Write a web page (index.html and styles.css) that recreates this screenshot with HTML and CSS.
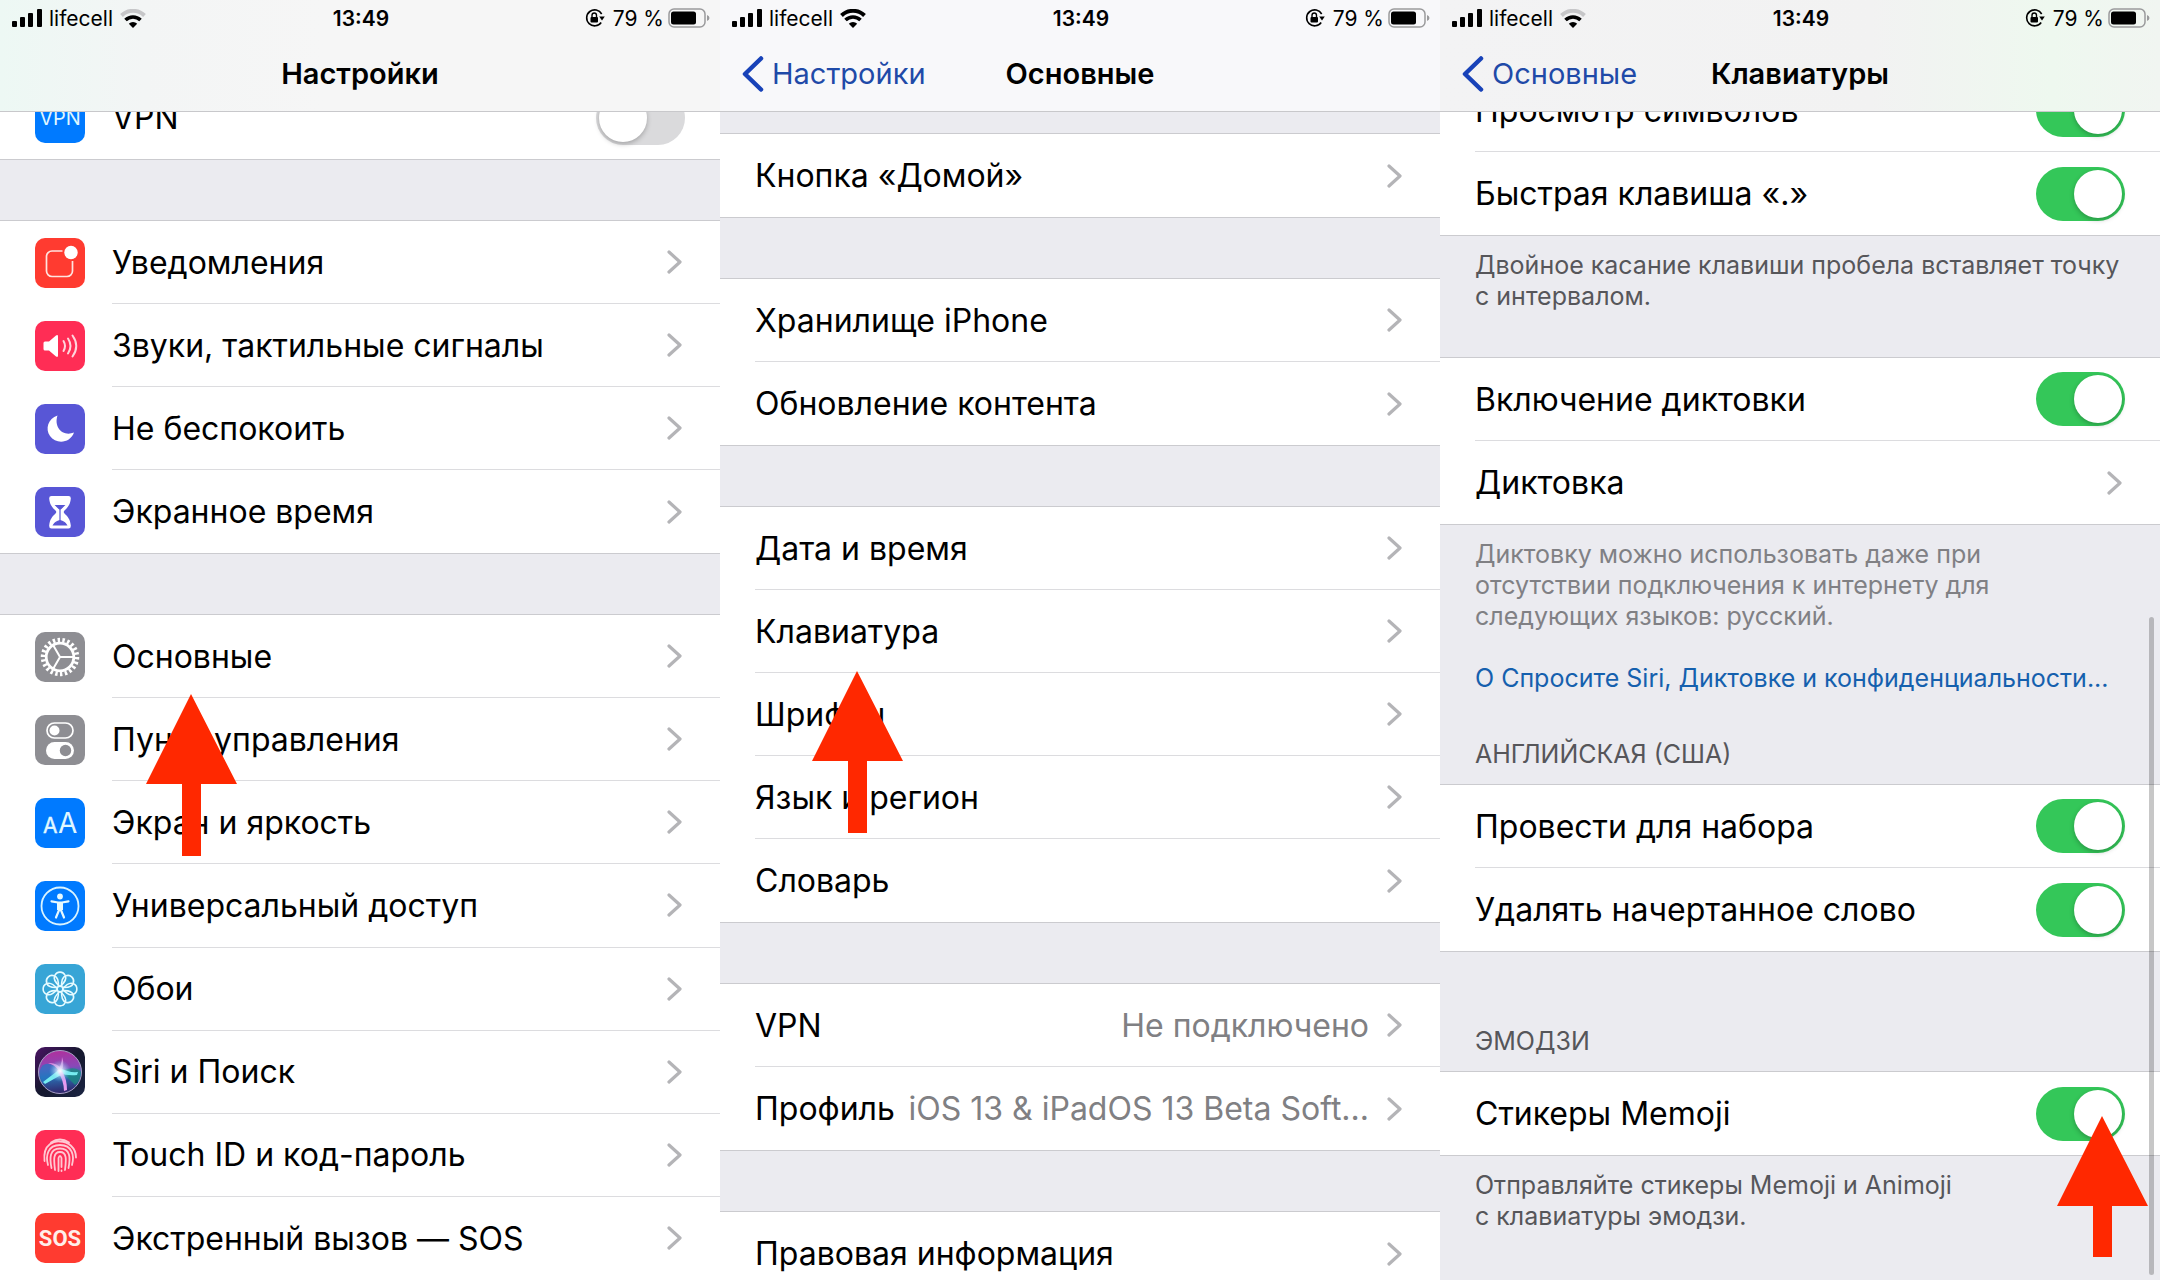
FILE: index.html
```html
<!DOCTYPE html>
<html lang="ru">

<head>
	<meta charset="utf-8">
	<title>Настройки</title>
	<link rel="stylesheet" href="styles.css">
</head>

<body>

	<!-- shared icons -->
	<svg class="sprite" aria-hidden="true">
		<symbol id="signal" viewBox="0 0 30 18">
			<rect x="0" y="12" width="5" height="6" rx="1"/>
			<rect x="8" y="8" width="5" height="10" rx="1"/>
			<rect x="16" y="4" width="5" height="14" rx="1"/>
			<rect x="25" y="0" width="5" height="18" rx="1"/>
		</symbol>
		<symbol id="wifi" viewBox="0 0 26 19">
			<path class="wifi-top" d="M1.5 6.5a16.5 16.5 0 0 1 23 0" fill="none" stroke-width="4"/>
			<path d="M5.5 11a10.800 10.800 0 0 1 15 0" fill="none" stroke="#000" stroke-width="3.600"/>
			<path d="M13 19l-4.200-4.300a6 6 0 0 1 8.400 0z" stroke="none"/>
		</symbol>
		<symbol id="lock" viewBox="0 0 20 20">
			<path d="M16.200 14.500a8 8 0 1 1 .5-8.500" fill="none" stroke="#000" stroke-width="1.600"/>
			<path d="M14.200 8.500h5.600l-2.800 4z"/>
			<rect x="5.500" y="9" width="7.500" height="5.500" rx="1"/>
			<path d="M7 9.500V7.300a2.250 2.250 0 0 1 4.500 0v2.200" fill="none" stroke="#000" stroke-width="1.400"/>
		</symbol>
		<symbol id="battery" viewBox="0 0 42 20">
			<rect x="1" y="1" width="36" height="18" rx="5" fill="none" stroke="#9a9a9c" stroke-width="1.500"/>
			<rect x="3" y="3.500" width="25" height="13" rx="2.500"/>
			<path d="M39 7v6q2.500-1 2.500-3t-2.500-3z" fill="#9a9a9c"/>
		</symbol>
		<symbol id="chevron" viewBox="0 0 15 24">
			<path d="M2 2l11 10L2 22" fill="none" stroke="#b4b4b7" stroke-width="3.200" stroke-linecap="round" stroke-linejoin="round"/>
		</symbol>
		<symbol id="back" viewBox="0 0 22 36">
			<path d="M19 2.500L3 18l16 15.500" fill="none" stroke="#1842b8" stroke-width="4.500" stroke-linecap="round" stroke-linejoin="round"/>
		</symbol>
		<symbol id="arrow" viewBox="0 0 91 162">
			<path d="M45 0L91 90H55V162H36V90H0z" fill="#ff2800"/>
		</symbol>
		<symbol id="arrow-short" viewBox="0 0 91 141">
			<path d="M45 0L91 90H55V141H36V90H0z" fill="#ff2800"/>
		</symbol>
	</svg>

	<main class="screens">

		<section class="screen">
			<header class="header header-first">
				<div class="status">
					<div class="status-left">
						<svg class="signal"><use href="#signal"/></svg>
						<span>lifecell</span>
						<svg class="wifi wifi-weak"><use href="#wifi"/></svg>
					</div>
					<time>13:49</time>
					<div class="status-right">
						<svg class="lock"><use href="#lock"/></svg>
						<span>79 %</span>
						<svg class="battery"><use href="#battery"/></svg>
					</div>
				</div>
				<div class="nav">
					<h1>Настройки</h1>
				</div>
			</header>

			<div class="group cut cut-first">
				<div class="row">
					<svg class="icon" viewBox="0 0 50 50">
						<rect width="50" height="50" rx="10" fill="#007aff"/>
						<text x="25" y="32" font-size="20" text-anchor="middle" fill="#dff6ff">VPN</text>
					</svg>
					<div class="row-body">
						<label for="vpn">VPN</label>
						<input class="switch" id="vpn" type="checkbox">
					</div>
				</div>
			</div>

			<div class="group">
				<a class="row" href="#">
					<svg class="icon" viewBox="0 0 50 50">
						<rect width="50" height="50" rx="10" fill="#ff3b30"/>
						<path d="M27.500 13H17a5.500 5.500 0 0 0-5.500 5.500V33a5.500 5.500 0 0 0 5.500 5.500h15a5.500 5.500 0 0 0 5.500-5.500V23" fill="none" stroke="#ffe4df" stroke-width="1.700"/>
						<circle cx="36" cy="14.500" r="6.700" fill="#fff"/>
					</svg>
					<span class="row-body"><span>Уведомления</span><svg class="chevron"><use href="#chevron"/></svg></span>
				</a>
				<a class="row" href="#">
					<svg class="icon" viewBox="0 0 50 50">
						<rect width="50" height="50" rx="10" fill="#ff2d55"/>
						<path d="M8.500 22q0-1.500 1.500-1.500h4l7-6q2-1.200 2 1v19q0 2.200-2 1l-7-6h-4q-1.500 0-1.500-1.500z" fill="#fff"/>
						<path d="M28.500 20q3 5 0 10M33 17.500q5 7.500 0 15M37.500 14.500q7.500 10.500 0 21" fill="none" stroke="#ffd5dd" stroke-width="2" stroke-linecap="round"/>
					</svg>
					<span class="row-body"><span>Звуки, тактильные сигналы</span><svg class="chevron"><use href="#chevron"/></svg></span>
				</a>
				<a class="row" href="#">
					<svg class="icon" viewBox="0 0 50 50">
						<rect width="50" height="50" rx="10" fill="#5856d6"/>
						<path d="M22.500 11.500C13 14.500 10 25 15 32c6 8.500 20 7.500 24-3.500C28 33 18.500 23.500 22.500 11.500z" fill="#fff"/>
					</svg>
					<span class="row-body"><span>Не беспокоить</span><svg class="chevron"><use href="#chevron"/></svg></span>
				</a>
				<a class="row" href="#">
					<svg class="icon" viewBox="0 0 50 50">
						<rect width="50" height="50" rx="10" fill="#5856d6"/>
						<path d="M16.500 9h17q2.500 0 2.300 2.500c-.5 6-3 9-6.300 12q-1.500 1.500 0 3c3.300 3 5.800 6 6.300 12q.2 3-2.300 3h-17q-2.500 0-2.300-3c.5-6 3-9 6.300-12q1.500-1.500 0-3c-3.300-3-5.800-6-6.300-12Q14 9 16.500 9z" fill="#fff"/>
						<path d="M21 18.500h8l-4 4zM25 21v13M18.500 38q2-3.500 6.500-4.500 4.500 1 6.500 4.500z" fill="#5856d6" stroke="#5856d6" stroke-width="1.200"/>
					</svg>
					<span class="row-body"><span>Экранное время</span><svg class="chevron"><use href="#chevron"/></svg></span>
				</a>
			</div>

			<div class="group group-fill">
				<a class="row" href="#">
					<svg class="icon" viewBox="0 0 50 50">
						<rect width="50" height="50" rx="10" fill="#8e8e93"/>
						<circle cx="25" cy="25" r="17" fill="none" stroke="#fff" stroke-width="4.500" pathLength="88" stroke-dasharray="2 2"/>
						<circle cx="25" cy="25" r="13.800" fill="none" stroke="#fff" stroke-width="2.800"/>
						<path d="M25 25h13M25 25l-6.800-11.800M25 25l-6.800 11.800" fill="none" stroke="#fff" stroke-width="2"/>
					</svg>
					<span class="row-body"><span>Основные</span><svg class="chevron"><use href="#chevron"/></svg></span>
					<svg class="arrow arrow-general"><use href="#arrow"/></svg>
				</a>
				<a class="row" href="#">
					<svg class="icon" viewBox="0 0 50 50">
						<rect width="50" height="50" rx="10" fill="#8e8e93"/>
						<rect x="12" y="8" width="26" height="15" rx="7.500" fill="none" stroke="#fff" stroke-width="1.700"/>
						<circle cx="19.500" cy="15.500" r="5" fill="#fff"/>
						<rect x="11" y="27" width="28" height="17" rx="8.500" fill="#fff"/>
						<circle cx="30.500" cy="35.500" r="5.700" fill="#8e8e93"/>
					</svg>
					<span class="row-body"><span>Пункт управления</span><svg class="chevron"><use href="#chevron"/></svg></span>
				</a>
				<a class="row" href="#">
					<svg class="icon" viewBox="0 0 50 50">
						<rect width="50" height="50" rx="10" fill="#007aff"/>
						<text x="8" y="35" font-size="21" fill="#e0f8ff" stroke="#e0f8ff" stroke-width=".4">A</text>
						<text x="23" y="35" font-size="28" fill="#e0f8ff">A</text>
					</svg>
					<span class="row-body"><span>Экран и яркость</span><svg class="chevron"><use href="#chevron"/></svg></span>
				</a>
				<a class="row" href="#">
					<svg class="icon" viewBox="0 0 50 50">
						<rect width="50" height="50" rx="10" fill="#007aff"/>
						<circle cx="25" cy="25" r="18.500" fill="none" stroke="#d9f4ff" stroke-width="1.800"/>
						<circle cx="25" cy="15.500" r="2.900" fill="#e6f9ff"/>
						<path d="M16.500 20.300l6.500 1.200h4l6.500-1.200M24.500 22v6l-3.500 8.500M25.500 22v6l3.500 8.500" fill="none" stroke="#e6f9ff" stroke-width="2.200" stroke-linecap="round"/>
						<path d="M22 21h6v8h-6z" fill="#e6f9ff"/>
					</svg>
					<span class="row-body"><span>Универсальный доступ</span><svg class="chevron"><use href="#chevron"/></svg></span>
				</a>
				<a class="row" href="#">
					<svg class="icon" viewBox="0 0 50 50">
						<rect width="50" height="50" rx="10" fill="#37a5d6"/>
						<g fill="none" stroke="#e6fbff" stroke-width="1.600">
							<path id="petal" d="M25 22.500C22 20 17.500 16 19.800 11.500a5.700 5.700 0 0 1 10.400 0C32.500 16 28 20 25 22.500z"/>
							<use href="#petal" transform="rotate(45 25 25)"/>
							<use href="#petal" transform="rotate(90 25 25)"/>
							<use href="#petal" transform="rotate(135 25 25)"/>
							<use href="#petal" transform="rotate(180 25 25)"/>
							<use href="#petal" transform="rotate(225 25 25)"/>
							<use href="#petal" transform="rotate(270 25 25)"/>
							<use href="#petal" transform="rotate(315 25 25)"/>
						</g>
						<circle cx="25" cy="25" r="2.700" fill="#37a5d6" stroke="#e6fbff" stroke-width="1.200"/>
					</svg>
					<span class="row-body"><span>Обои</span><svg class="chevron"><use href="#chevron"/></svg></span>
				</a>
				<a class="row" href="#">
					<svg class="icon" viewBox="0 0 50 50">
						<defs>
							<linearGradient id="siri-bg" x1="0" y1="0" x2="1" y2="1">
								<stop offset="0" stop-color="#4a1464"/>
								<stop offset=".5" stop-color="#15182e"/>
								<stop offset="1" stop-color="#1a2442"/>
							</linearGradient>
							<linearGradient id="siri-ball" x1="0.400" y1="0" x2="0.500" y2="1">
								<stop offset="0" stop-color="#b0309c"/>
								<stop offset=".4" stop-color="#8a48b8"/>
								<stop offset=".6" stop-color="#2b70b4"/>
								<stop offset="1" stop-color="#302268"/>
							</linearGradient>
							<radialGradient id="siri-glow">
								<stop offset="0" stop-color="#fff"/>
								<stop offset=".4" stop-color="#d7f2ff" stop-opacity=".6"/>
								<stop offset="1" stop-color="#62c8f0" stop-opacity="0"/>
							</radialGradient>
						</defs>
						<rect width="50" height="50" rx="10" fill="url(#siri-bg)"/>
						<circle cx="25" cy="25" r="21.500" fill="url(#siri-ball)" stroke="#a8a0c8"/>
						<path d="M26 24Q10 10 5 23q-1 8 3 13z" fill="#2377c4" opacity=".7"/>
						<path d="M26 24q14-6 20 1-1 10-6 13z" fill="#1c8a82" opacity=".8"/>
						<path d="M25 22L8 35l2 2 16-9zM25 21q9 5 18 4l-1 3q-10 1-18-2z" fill="#76edf0"/>
						<path d="M23 25q6 9 6 19l3-1q0-11-5-19z" fill="#e59af0"/>
						<path d="M22 24q5-6 5-14 3 8-1 15zM24 24q-5-7-11-8 8-1 14 6z" fill="#f0a0ec" opacity=".8"/>
						<circle cx="25" cy="24" r="11" fill="url(#siri-glow)"/>
					</svg>
					<span class="row-body"><span>Siri и Поиск</span><svg class="chevron"><use href="#chevron"/></svg></span>
				</a>
				<a class="row" href="#">
					<svg class="icon" viewBox="0 0 50 50">
						<rect width="50" height="50" rx="10" fill="#ff2d55"/>
						<g fill="none" stroke="#ffc9d3" stroke-width="1.800" stroke-linecap="round">
							<path d="M16 12.500q9-6 18 0"/>
							<path d="M9.500 31c-2-18 11-20 15.500-19.500 8 0 16 6 16 16"/>
							<path d="M13 35c-2.500-9-.5-20 12-20s14.500 11 12 20"/>
							<path d="M16.500 38c-2-10-2-19.500 8.500-19.500S35.500 28 33.500 38"/>
							<path d="M20 40c-1-9-2.500-18 5-18s6 9 5 18"/>
							<path d="M23.500 41V28q1.500-4 3 0v9M26.500 40.500v.5"/>
						</g>
					</svg>
					<span class="row-body"><span>Touch ID и код-пароль</span><svg class="chevron"><use href="#chevron"/></svg></span>
				</a>
				<a class="row" href="#">
					<svg class="icon" viewBox="0 0 50 50">
						<rect width="50" height="50" rx="10" fill="#ff3b30"/>
						<text class="sos" x="25" y="33" text-anchor="middle">SOS</text>
					</svg>
					<span class="row-body"><span>Экстренный вызов — SOS</span><svg class="chevron"><use href="#chevron"/></svg></span>
				</a>
			</div>
		</section>

		<section class="screen">
			<header class="header">
				<div class="status">
					<div class="status-left">
						<svg class="signal"><use href="#signal"/></svg>
						<span>lifecell</span>
						<svg class="wifi"><use href="#wifi"/></svg>
					</div>
					<time>13:49</time>
					<div class="status-right">
						<svg class="lock"><use href="#lock"/></svg>
						<span>79 %</span>
						<svg class="battery"><use href="#battery"/></svg>
					</div>
				</div>
				<div class="nav">
					<a class="back" href="#"><svg><use href="#back"/></svg>Настройки</a>
					<h1>Основные</h1>
				</div>
			</header>

			<div class="group group-top">
				<a class="row" href="#"><span class="row-body"><span>Кнопка «Домой»</span><svg class="chevron"><use href="#chevron"/></svg></span></a>
			</div>

			<div class="group">
				<a class="row" href="#"><span class="row-body"><span>Хранилище iPhone</span><svg class="chevron"><use href="#chevron"/></svg></span></a>
				<a class="row" href="#"><span class="row-body"><span>Обновление контента</span><svg class="chevron"><use href="#chevron"/></svg></span></a>
			</div>

			<div class="group">
				<a class="row" href="#"><span class="row-body"><span>Дата и время</span><svg class="chevron"><use href="#chevron"/></svg></span></a>
				<a class="row" href="#">
					<span class="row-body"><span>Клавиатура</span><svg class="chevron"><use href="#chevron"/></svg></span>
					<svg class="arrow arrow-keyboard"><use href="#arrow"/></svg>
				</a>
				<a class="row" href="#"><span class="row-body"><span>Шрифты</span><svg class="chevron"><use href="#chevron"/></svg></span></a>
				<a class="row" href="#"><span class="row-body"><span>Язык и регион</span><svg class="chevron"><use href="#chevron"/></svg></span></a>
				<a class="row" href="#"><span class="row-body"><span>Словарь</span><svg class="chevron"><use href="#chevron"/></svg></span></a>
			</div>

			<div class="group">
				<a class="row" href="#"><span class="row-body"><span>VPN</span><span class="value">Не подключено</span><svg class="chevron"><use href="#chevron"/></svg></span></a>
				<a class="row" href="#"><span class="row-body"><span>Профиль</span><span class="value">iOS 13 &amp; iPadOS 13 Beta Soft...</span><svg class="chevron"><use href="#chevron"/></svg></span></a>
			</div>

			<div class="group">
				<a class="row" href="#"><span class="row-body"><span>Правовая информация</span><svg class="chevron"><use href="#chevron"/></svg></span></a>
			</div>
		</section>

		<section class="screen">
			<header class="header header-last">
				<div class="status">
					<div class="status-left">
						<svg class="signal"><use href="#signal"/></svg>
						<span>lifecell</span>
						<svg class="wifi wifi-weak"><use href="#wifi"/></svg>
					</div>
					<time>13:49</time>
					<div class="status-right">
						<svg class="lock"><use href="#lock"/></svg>
						<span>79 %</span>
						<svg class="battery"><use href="#battery"/></svg>
					</div>
				</div>
				<div class="nav">
					<a class="back" href="#"><svg><use href="#back"/></svg>Основные</a>
					<h1>Клавиатуры</h1>
				</div>
			</header>

			<div class="group cut cut-last">
				<div class="row">
					<div class="row-body">
						<label for="preview">Просмотр символов</label>
						<input class="switch" id="preview" type="checkbox" checked>
					</div>
				</div>
				<div class="row">
					<div class="row-body">
						<label for="shortcut">Быстрая клавиша «.»</label>
						<input class="switch" id="shortcut" type="checkbox" checked>
					</div>
				</div>
			</div>
			<p class="note">Двойное касание клавиши пробела вставляет точку<br>с интервалом.</p>

			<div class="group">
				<div class="row">
					<div class="row-body">
						<label for="dictation">Включение диктовки</label>
						<input class="switch" id="dictation" type="checkbox" checked>
					</div>
				</div>
				<a class="row" href="#"><span class="row-body"><span>Диктовка</span><svg class="chevron"><use href="#chevron"/></svg></span></a>
			</div>
			<p class="note note-light">Диктовку можно использовать даже при<br>отсутствии подключения к интернету для<br>следующих языков: русский.<br><br><a href="#">О Спросите Siri, Диктовке и конфиденциальности...</a></p>

			<h2>АНГЛИЙСКАЯ (США)</h2>
			<div class="group">
				<div class="row">
					<div class="row-body">
						<label for="swipe">Провести для набора</label>
						<input class="switch" id="swipe" type="checkbox" checked>
					</div>
				</div>
				<div class="row">
					<div class="row-body">
						<label for="delete">Удалять начертанное слово</label>
						<input class="switch" id="delete" type="checkbox" checked>
					</div>
				</div>
			</div>

			<h2 class="heading-far">ЭМОДЗИ</h2>
			<div class="group">
				<div class="row">
					<div class="row-body">
						<label for="memoji">Стикеры Memoji</label>
						<input class="switch" id="memoji" type="checkbox" checked>
					</div>
					<svg class="arrow arrow-memoji"><use href="#arrow-short"/></svg>
				</div>
			</div>
			<p class="note">Отправляйте стикеры Memoji и Animoji<br>с клавиатуры эмодзи.</p>
			<div class="scrollbar"></div>
		</section>

	</main>

</body>

</html>
```
FILE: styles.css
```css
* {
	box-sizing: border-box;
}

body {
	margin: 0;
	font-family: Inter, "Noto Sans", sans-serif;
	font-size: 32px;
	color: #000;
	background-color: #ebebf0;
}

a {
	color: inherit;
	text-decoration: none;
}

svg {
	display: block;
	flex: none;
}

.sprite {
	position: absolute;
	width: 0;
	height: 0;
}

.screens {
	display: flex;
	height: 100vh;
	overflow: hidden;
}

.screen {
	display: flex;
	flex: 1;
	flex-direction: column;
	min-width: 0;
	position: relative;
}

/* header */

.header {
	flex: none;
	height: 112px;
	background-color: #f8f8fa;
	border-bottom: 1px solid #c8c8cb;
}

.header-first {
	background: linear-gradient(to right, #edf8f4, #f3f5f5 20%, #f6f6f6 45%);
}

.header-last {
	background: linear-gradient(to right, #f3f3f4, #f2f2f2 60%, #eef8ef 85%, #f1f5f1);
}

.status {
	display: grid;
	grid-template-columns: 1fr auto 1fr;
	align-items: center;
	height: 36px;
	padding: 0 10px 0 12px;
	font-size: 21px;
}

.status time {
	font-weight: 600;
}

.status-left,
.status-right {
	display: flex;
	align-items: center;
	gap: 7px;
}

.status-right {
	justify-content: flex-end;
	gap: 4px;
}

.signal {
	width: 30px;
	height: 18px;
}

.wifi {
	width: 26px;
	height: 19px;
	--top: #000;
}

.wifi-top {
	stroke: var(--top);
}

.wifi-weak {
	--top: #c6c6c8;
}

.lock {
	width: 20px;
	height: 20px;
	margin-right: 4px;
}

.battery {
	width: 42px;
	height: 20px;
}

.nav {
	display: grid;
	grid-template-columns: 1fr auto 1fr;
	align-items: center;
	height: 75px;
	padding: 0 22px;
}

.nav h1 {
	grid-column: 2;
	margin: 0;
	font-size: 29px;
	font-weight: 600;
}

.back {
	display: flex;
	align-items: center;
	gap: 8px;
	font-size: 29px;
	color: #1f4aa8;
}

.back svg {
	width: 22px;
	height: 36px;
}

/* lists */

.group {
	flex: none;
	background-color: #fff;
	border-top: 1px solid #cbcbcf;
	border-bottom: 1px solid #cbcbcf;
}

.group + .group {
	margin-top: 60px;
}

.group-top {
	margin-top: 21px;
}

/* groups scrolled under the header */
.cut {
	display: flex;
	flex-direction: column;
	justify-content: flex-end;
	overflow: hidden;
	border-top: 0;
}

.cut-first {
	height: 48px;
}

.cut-last {
	height: 124px;
}

/* long list runs down to the bottom of the screen */
.group-fill {
	display: flex;
	flex: 1;
	flex-direction: column;
	border-bottom: 0;
}

.row {
	display: flex;
	flex: none;
	align-items: center;
	gap: 27px;
	height: 83px;
	padding-left: 35px;
	position: relative;
}

.group-fill .row {
	flex: 1;
}

.icon {
	width: 50px;
	height: 50px;
}

.sos {
	font-family: Roboto, sans-serif;
	font-size: 22px;
	font-weight: 700;
	fill: #ffeeea;
}

.row-body {
	display: flex;
	flex: 1;
	align-items: center;
	justify-content: space-between;
	height: 100%;
	min-width: 0;
	padding-right: 35px;
	border-bottom: 1px solid #dcdcdf;
	white-space: nowrap;
}

.row:last-child .row-body {
	border-bottom: 0;
}

.value {
	margin-left: auto;
	padding-right: 18px;
	color: #808083;
}

.chevron {
	width: 15px;
	height: 24px;
	margin-right: 3px;
}

.switch {
	appearance: none;
	width: 89px;
	height: 54px;
	margin: 0;
	padding: 3px;
	border-radius: 27px;
	background-color: #dadadc;
}

.switch::before {
	content: "";
	display: block;
	width: 48px;
	height: 48px;
	border-radius: 50%;
	background-color: #fff;
	box-shadow: 0 2px 5px rgba(0, 0, 0, .25);
}

.switch:checked {
	background-color: #34c759;
}

.switch:checked::before {
	margin-left: auto;
}

.note,
h2 {
	flex: none;
	margin: 0;
	padding: 14px 35px 45px;
	font-size: 25px;
	font-weight: 400;
	line-height: 31px;
	color: #56565a;
	white-space: nowrap;
}

.note-light {
	color: #808084;
}

.note a {
	color: #1560ae;
}

h2 {
	padding: 0 35px 14px;
}

.heading-far {
	padding-top: 74px;
}

.scrollbar {
	position: absolute;
	top: 617px;
	right: 6px;
	bottom: 5px;
	width: 5px;
	border-radius: 3px;
	background-color: rgba(0, 0, 0, .22);
}

/* red pointers */

.arrow {
	position: absolute;
	z-index: 1;
	width: 91px;
	height: 162px;
}

.arrow-general {
	top: 79px;
	left: 146px;
}

.arrow-keyboard {
	top: 81px;
	left: 92px;
}

.arrow-memoji {
	top: 44px;
	right: 12px;
	height: 141px;
}
```
